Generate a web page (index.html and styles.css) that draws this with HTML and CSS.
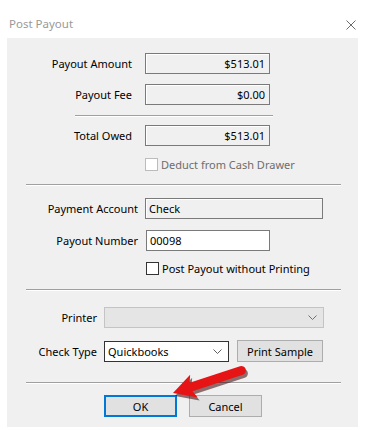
FILE: index.html
```html
<!DOCTYPE html>
<html lang="en">
<head>
  <meta charset="UTF-8" />
  <title>Post Payout</title>
  <link rel="stylesheet" href="styles.css">
</head>
<body>
  <div class="titlebar">
    <span class="title">Post Payout</span>
    <svg class="close" width="10" height="10" viewBox="0 0 10 10">
      <path d="M0.5 0.5 L9.5 9.5 M9.5 0.5 L0.5 9.5" stroke="#6b6b6b" stroke-width="1" fill="none"/>
    </svg>
  </div>

  <div class="panel">
    <div class="section amounts">
      <div class="row">
        <span class="lbl">Payout Amount</span>
        <div class="field readonly num">$513.01</div>
      </div>
      <div class="row gap10">
        <span class="lbl">Payout Fee</span>
        <div class="field readonly num">$0.00</div>
      </div>
      <div class="sep short"></div>
      <div class="row total">
        <span class="lbl">Total Owed</span>
        <div class="field readonly num">$513.01</div>
      </div>
      <div class="check disabled">
        <span class="box"></span>
        <span>Deduct from Cash Drawer</span>
      </div>
    </div>

    <div class="sep"></div>

    <div class="section account">
      <div class="row">
        <span class="lbl">Payment Account</span>
        <div class="field readonly wide">Check</div>
      </div>
      <div class="row gap11">
        <span class="lbl">Payout Number</span>
        <div class="field edit">00098</div>
      </div>
      <div class="check">
        <span class="box"></span>
        <span>Post Payout without Printing</span>
      </div>
    </div>

    <div class="sep"></div>

    <div class="section printing">
      <div class="row">
        <span class="lbl">Printer</span>
        <div class="combo disabled printer">
          <span class="value"></span>
          <svg class="chev" width="9" height="5" viewBox="0 0 9 5"><path d="M0.5 0.5 L4.5 4.5 L8.5 0.5" stroke="#707070" fill="none"/></svg>
        </div>
      </div>
      <div class="row checktype">
        <span class="lbl">Check Type</span>
        <div class="combo type">
          <span class="value">Quickbooks</span>
          <svg class="chev" width="9" height="5" viewBox="0 0 9 5"><path d="M0.5 0.5 L4.5 4.5 L8.5 0.5" stroke="#606060" fill="none"/></svg>
        </div>
        <button class="btn sample">Print Sample</button>
      </div>
    </div>

    <div class="sep bottom"></div>

    <div class="actions">
      <button class="btn ok">OK</button>
      <button class="btn">Cancel</button>
    </div>
  </div>

  <svg class="arrow" width="368" height="430" viewBox="0 0 368 430">
    <g transform="translate(175 396) rotate(-18.2)" opacity="0.55">
      <path d="M0 0 L22 -12 L19 -4.5 L72 -4.5 A4.5 4.5 0 0 1 72 4.5 L19 4.5 L22 12 Z" fill="#3a0000"/>
    </g>
    <g transform="translate(173 393) rotate(-18.2)">
      <path d="M0 0 L22 -12 L19 -4.5 L72 -4.5 A4.5 4.5 0 0 1 72 4.5 L19 4.5 L22 12 Z" fill="#e61414"/>
    </g>
  </svg>
</body>
</html>
```

FILE: styles.css
```css
body {
  margin: 0;
  background: #fff;
  font-family: 'Noto Sans', 'Segoe UI', sans-serif;
  font-size: 11px;
  color: #000;
  width: 368px;
  height: 430px;
  position: relative;
  overflow: hidden;
}

.titlebar {
  height: 38px;
  position: relative;
}

.title {
  display: block;
  padding: 16px 0 0 9px;
  line-height: 16px;
  font-size: 11.5px;
  color: #999;
}

.close {
  position: absolute;
  left: 346px;
  top: 20px;
}

.panel {
  margin-left: 7px;
  width: 351px;
  height: 389px;
  background: #f0f0f0;
  overflow: hidden;
}

.row {
  display: flex;
  align-items: center;
}

.lbl {
  text-align: right;
  white-space: nowrap;
}

.field {
  height: 21px;
  line-height: 19px;
  box-sizing: border-box;
  border: 1px solid #7a7a7a;
  padding: 0 4px 0 3px;
  white-space: nowrap;
}

.field.readonly {
  background: #f0f0f0;
  box-shadow: inset 1px 1px 0 #fff;
}

.field.edit {
  background: #fff;
}

.num {
  text-align: right;
}

/* amounts */
.amounts {
  padding-top: 15px;
}

.amounts .lbl {
  width: 125px;
  margin-right: 13px;
}

.amounts .field {
  width: 125px;
}

.gap10 {
  margin-top: 10px;
}

.gap11 {
  margin-top: 11px;
}

.total {
  margin-top: 8px;
}

.check {
  display: flex;
  align-items: center;
  height: 13px;
  margin-left: 138px;
  margin-top: 12px;
  white-space: nowrap;
}

.check .box {
  width: 13px;
  height: 13px;
  box-sizing: border-box;
  border: 1px solid #333;
  background: #fff;
  margin-right: 3px;
  flex: none;
}

.check.disabled {
  color: #6d6d6d;
}

.check.disabled .box {
  border-color: #bcbcbc;
}

.sep {
  height: 0;
  border-top: 1px solid #a0a0a0;
  border-bottom: 1px solid #fff;
  margin: 13px 17px 0 19px;
}

.sep.short {
  margin: 10px 0 0 68px;
  width: 198px;
}

/* account */
.account {
  padding-top: 12px;
}

.account .lbl {
  width: 131px;
  margin-right: 7px;
}

.account .wide {
  width: 178px;
}

.account .edit {
  width: 124px;
  margin-left: 1px;
  text-align: left;
}

.account .check {
  margin-left: 139px;
  margin-top: 11px;
}

.account + .sep {
  margin-top: 14px;
}

/* printing */
.printing {
  padding-top: 16px;
}

.printing .lbl {
  width: 90px;
  margin-right: 7px;
}

.combo {
  height: 21px;
  box-sizing: border-box;
  border: 1px solid #7a7a7a;
  background: #fff;
  display: flex;
  align-items: center;
  padding: 0 6px 0 3px;
}

.combo .value {
  flex: 1;
  line-height: 19px;
}

.combo.disabled {
  background: #e5e5e5;
  border-color: #c4c4c4;
}

.printer {
  width: 220px;
}

.type {
  width: 125px;
  border-color: #333;
}

.checktype {
  margin-top: 12px;
}

.btn {
  font-family: inherit;
  font-size: 11px;
  color: #000;
  background: #e1e1e1;
  border: 1px solid #adadad;
  height: 22px;
  padding: 0;
  box-sizing: border-box;
}

.sample {
  width: 86px;
  margin-left: 8px;
}

.sep.bottom {
  margin-top: 20px;
}

.actions {
  display: flex;
  padding: 11px 0 0 97px;
}

.actions .btn {
  width: 73px;
  margin-right: 12px;
}

.actions .ok {
  border: 2px solid #0078d7;
}

.arrow {
  position: absolute;
  left: 0;
  top: 0;
  pointer-events: none;
}
```
